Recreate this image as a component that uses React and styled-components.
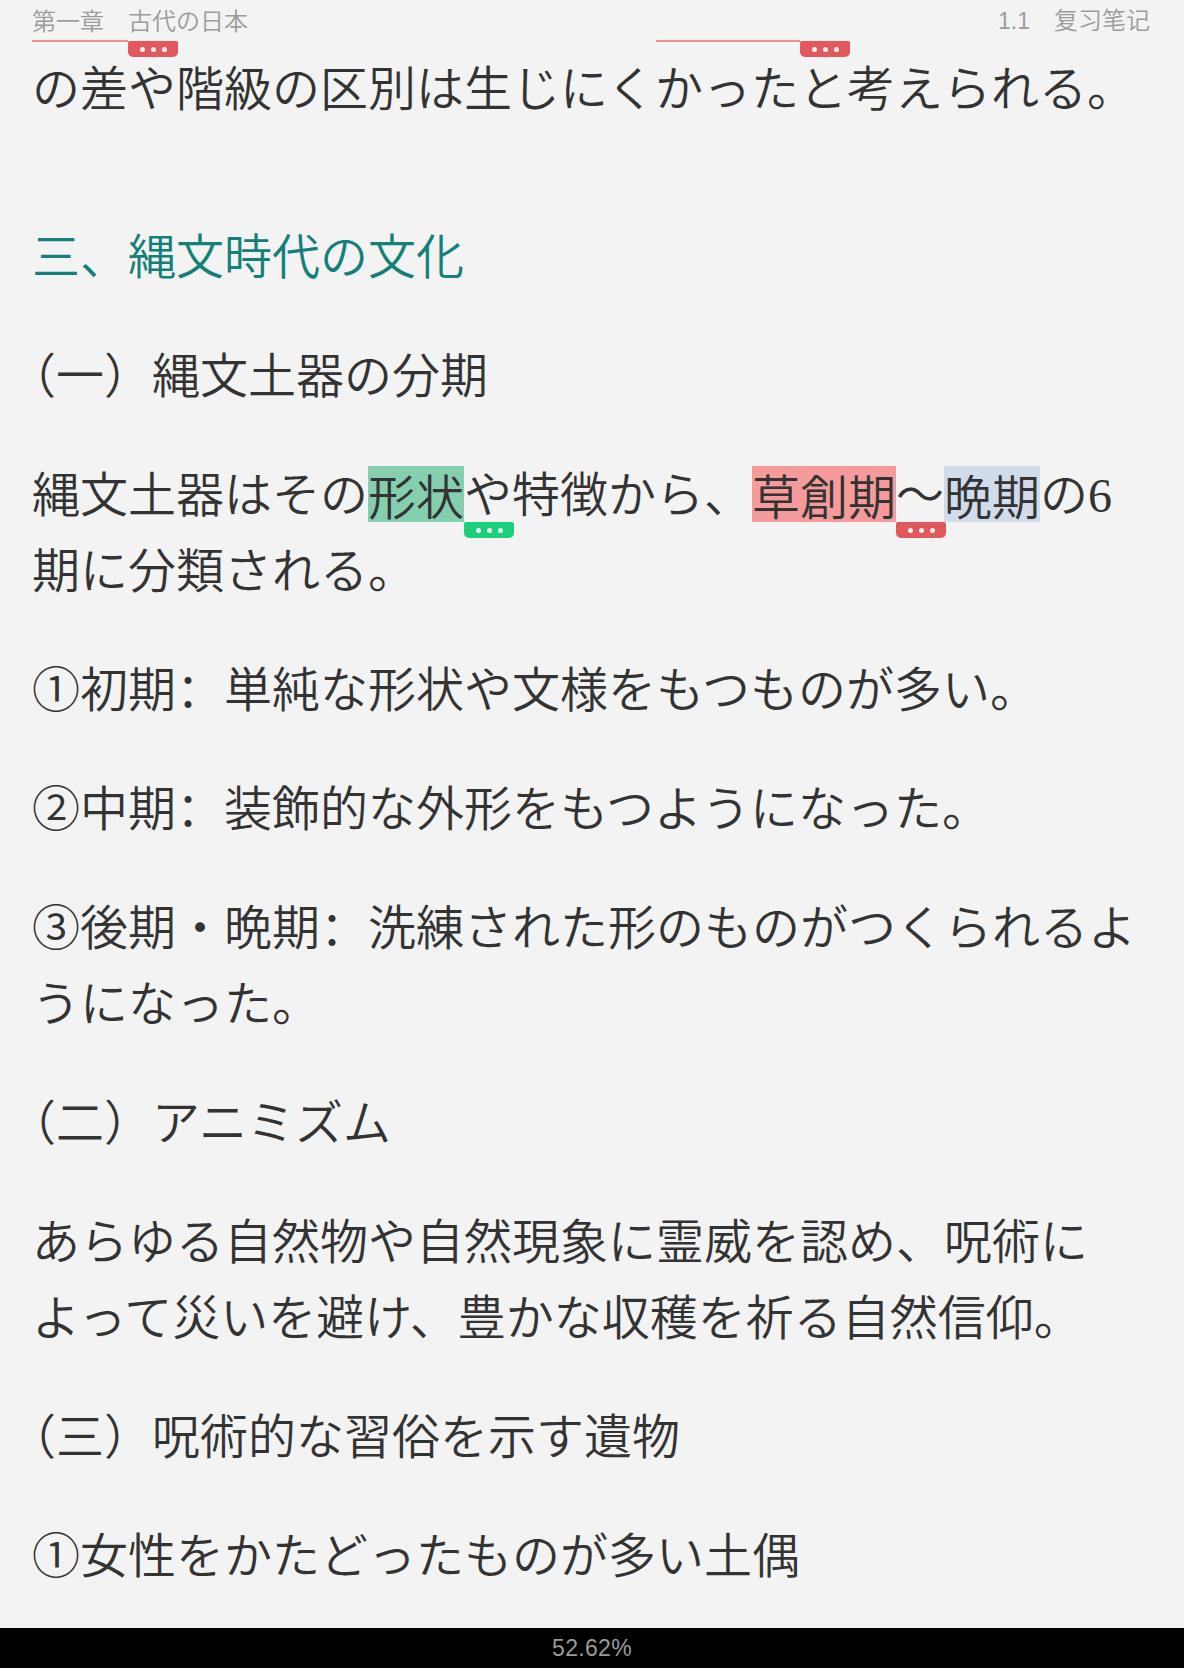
import React from "react";
import styled, { createGlobalStyle } from "styled-components";

const GlobalStyle = createGlobalStyle`
  html, body { margin: 0; padding: 0; background: #f3f3f3; }
  body {
    font-family: "Noto Sans CJK JP", "Noto Sans CJK SC", sans-serif;
    -webkit-font-smoothing: antialiased;
  }
`;

const tones = {
  green: { fill: "#86cfae", badge: "#1dcf7b" },
  red: { fill: "#f69b9b", badge: "#e1585d" },
  blue: { fill: "#d0dcea", badge: "#8fa8c6" },
};

const Screen = styled.div`
  width: 1184px;
  height: 1668px;
  display: flex;
  flex-direction: column;
  overflow: hidden;
  background: #f3f3f3;
`;

const TopBar = styled.header`
  position: relative;
  z-index: 2;
  flex: 0 0 40px;
  display: flex;
  align-items: center;
  justify-content: space-between;
  padding: 0 34px 0 32px;
  font-size: 24px;
  line-height: 1;
  color: #9c9c9c;
  font-weight: 350;
`;

const Crumb = styled.span`
  white-space: pre;
`;

const Meta = styled.span`
  white-space: pre;
  font-family: "Noto Sans CJK SC", "Noto Sans CJK JP", sans-serif;
`;

const MetaNum = styled.span`
  font-family: "Liberation Sans", sans-serif;
  font-size: 23px;
`;

const CarryUnderline = styled.span`
  position: absolute;
  top: 40px;
  left: ${(p) => p.$left}px;
  width: ${(p) => p.$width}px;
  height: 1.5px;
  background: #ee8e8e;
`;

const Badge = styled.span`
  position: absolute;
  left: 100%;
  top: ${(p) => (p.$offset != null ? p.$offset : "100%")};
  width: 50px;
  height: 16px;
  border-radius: 2px 2px 5px 5px;
  background: ${(p) => tones[p.$tone].badge};
  display: flex;
  align-items: center;
  justify-content: center;
  gap: 6px;
  z-index: 3;
`;

const Dot = styled.span`
  width: 5px;
  height: 5px;
  border-radius: 50%;
  background: rgba(255, 255, 255, 0.9);
`;

const Content = styled.main`
  flex: 1 1 auto;
  overflow: hidden;
  display: flex;
  flex-direction: column;
  gap: 43px;
  padding: 7px 34px 0 32px;
`;

const Para = styled.p`
  margin: 0;
  font-size: 48px;
  line-height: 76px;
  color: #333333;
  font-weight: 350;
  text-spacing-trim: space-all;
`;

const SectionTitle = styled(Para)`
  margin-top: 49px;
  color: #14807a;
`;

const LeadBracket = styled.span`
  font-feature-settings: "halt" 1;
`;

const Colon = styled.span`
  font-family: "Noto Sans CJK SC", "Noto Sans CJK JP", sans-serif;
`;

const Highlight = styled.span`
  position: relative;
  display: inline-block;
  height: 56px;
  line-height: 56px;
  vertical-align: -3px;
  background: ${(p) => tones[p.$tone].fill};
`;

const SerifDigit = styled.span`
  font-family: "Liberation Serif", serif;
  line-height: 1;
`;

const BottomBar = styled.footer`
  flex: 0 0 40px;
  background: #000;
  display: flex;
  align-items: center;
  justify-content: center;
  color: #9a9a9a;
  font-family: "Liberation Sans", sans-serif;
  font-size: 23px;
  letter-spacing: 0.3px;
`;

function NoteBadge({ tone, offset }) {
  return (
    <Badge $tone={tone} $offset={offset}>
      <Dot />
      <Dot />
      <Dot />
    </Badge>
  );
}

export default function App() {
  return (
    <>
      <GlobalStyle />
      <Screen>
        <TopBar>
          <Crumb>第一章　古代の日本</Crumb>
          <Meta>
            <MetaNum>1.1</MetaNum>　复习笔记
          </Meta>
          <CarryUnderline $left={32} $width={96}>
            <NoteBadge tone="red" offset="1px" />
          </CarryUnderline>
          <CarryUnderline $left={656} $width={144}>
            <NoteBadge tone="red" offset="1px" />
          </CarryUnderline>
        </TopBar>
        <Content>
          <Para>の差や階級の区別は生じにくかったと考えられる。</Para>
          <SectionTitle>三、縄文時代の文化</SectionTitle>
          <Para>
            <LeadBracket>（</LeadBracket>一）縄文土器の分期
          </Para>
          <Para>
            縄文土器はその
            <Highlight $tone="green">
              形状
              <NoteBadge tone="green" />
            </Highlight>
            や特徴から、
            <Highlight $tone="red">
              草創期
              <NoteBadge tone="red" />
            </Highlight>
            ～<Highlight $tone="blue">晩期</Highlight>の<SerifDigit>6</SerifDigit>
            <br />
            期に分類される。
          </Para>
          <Para>
            ①初期<Colon>：</Colon>単純な形状や文様をもつものが多い。
          </Para>
          <Para>
            ②中期<Colon>：</Colon>装飾的な外形をもつようになった。
          </Para>
          <Para>
            ③後期・晩期<Colon>：</Colon>洗練された形のものがつくられるよ
            <br />
            うになった。
          </Para>
          <Para>
            <LeadBracket>（</LeadBracket>二）アニミズム
          </Para>
          <Para>
            あらゆる自然物や自然現象に霊威を認め、呪術に
            <br />
            よって災いを避け、豊かな収穫を祈る自然信仰。
          </Para>
          <Para>
            <LeadBracket>（</LeadBracket>三）呪術的な習俗を示す遺物
          </Para>
          <Para>①女性をかたどったものが多い土偶</Para>
        </Content>
        <BottomBar>52.62%</BottomBar>
      </Screen>
    </>
  );
}
